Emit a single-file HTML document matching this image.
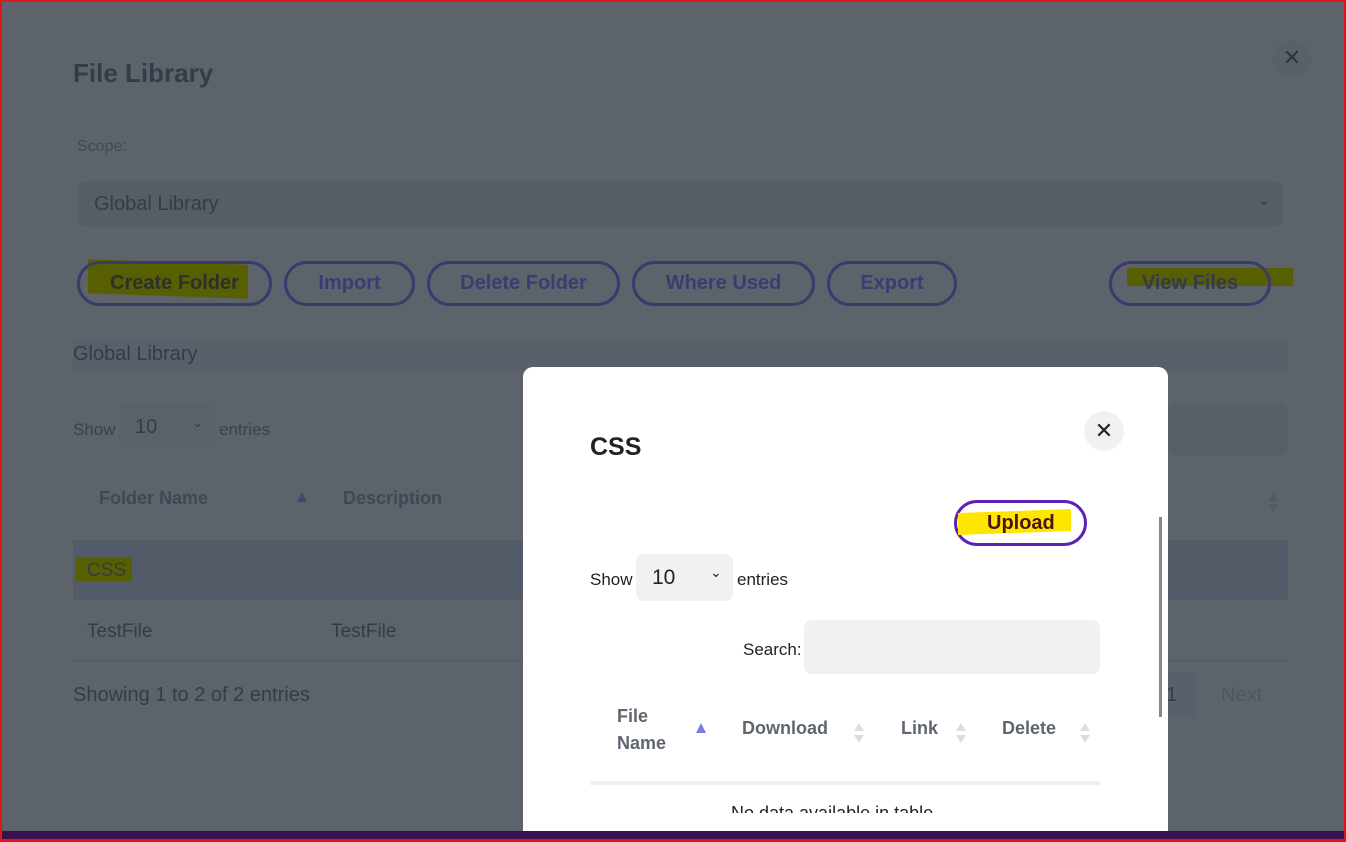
<!DOCTYPE html>
<html><head><style>
*{box-sizing:border-box;margin:0;padding:0}
body{width:1346px;height:842px;overflow:hidden;background:#5c636b;font-family:"Liberation Sans",sans-serif;position:relative}
.a{position:absolute;white-space:nowrap}
.dk{color:#363b47}
.btn{position:absolute;top:261px;height:45px;border:3px solid #3b3a6c;border-radius:23px;color:#3d3b72;font-size:20px;font-weight:bold;display:flex;align-items:center;justify-content:center}
.hl{position:absolute;background:#585f00}
.sort{position:absolute;width:0;height:0;border-left:5px solid transparent;border-right:5px solid transparent}
</style></head><body>
<div class="a" style="left:0;top:0;width:1346px;height:842px;border:2px solid #e0141a;border-bottom:none;pointer-events:none;z-index:9"></div>
<div class="a" style="left:0;bottom:0;width:1346px;height:3px;background:#e0141a;z-index:9"></div>
<div class="a" style="left:0;top:831px;width:1346px;height:9px;background:#38124f"></div>

<div class="a" style="left:1273px;top:40px;width:38px;height:38px;border-radius:50%;background:#586068;color:#333;font-size:22px;text-align:center;line-height:36px">✕</div>
<div class="a dk" style="left:73px;top:58px;font-size:26px;font-weight:bold">File Library</div>
<div class="a" style="left:77px;top:138px;font-size:16px;color:#434853">Scope:</div>
<div class="a" style="left:78px;top:181px;width:1205px;height:46px;background:#575d65;border-radius:8px"></div>
<div class="a dk" style="left:94px;top:193px;font-size:20px">Global Library</div>
<div class="a" style="left:1258px;top:192px;font-size:14px;color:#333">⌄</div>

<div class="hl" style="left:88px;top:262px;width:160px;height:34px;transform:skewY(2deg)"></div>
<div class="hl" style="left:1127px;top:268px;width:166px;height:18px"></div>
<div class="btn" style="left:77px;width:195px;color:#2e3030">Create Folder</div>
<div class="btn" style="left:284px;width:131px">Import</div>
<div class="btn" style="left:427px;width:193px">Delete Folder</div>
<div class="btn" style="left:632px;width:183px">Where Used</div>
<div class="btn" style="left:827px;width:130px">Export</div>
<div class="btn" style="left:1109px;width:162px;color:#363a50">View Files</div>

<div class="a" style="left:73px;top:338px;width:1215px;height:33px;background:#59606a"></div>
<div class="a dk" style="left:73px;top:343px;font-size:20px">Global Library</div>
<div class="a" style="left:73px;top:420px;font-size:17px;color:#3c414c">Show</div>
<div class="a" style="left:119px;top:403px;width:96px;height:46px;background:#5a6169;border-radius:8px"></div>
<div class="a dk" style="left:135px;top:416px;font-size:20px">10</div>
<div class="a dk" style="left:192px;top:414px;font-size:14px">⌄</div>
<div class="a" style="left:219px;top:420px;font-size:17px;color:#3c414c">entries</div>
<div class="a" style="left:1168px;top:403px;width:120px;height:52px;background:#585f67;border-radius:8px"></div>
<div class="a" style="left:99px;top:488px;font-size:18px;font-weight:bold;color:#3f4855">Folder Name</div>
<div class="sort" style="left:297px;top:492px;border-bottom:10px solid #3d4a70"></div>
<div class="a" style="left:343px;top:488px;font-size:18px;font-weight:bold;color:#3f4855">Description</div>
<div class="sort" style="left:1268px;top:493px;border-bottom:8px solid #545a63"></div>
<div class="sort" style="left:1268px;top:504px;border-top:8px solid #545a63"></div>
<div class="a" style="left:73px;top:540px;width:1215px;height:60px;background:#545b68"></div>
<div class="hl" style="left:76px;top:557px;width:56px;height:24px"></div>
<div class="a dk" style="left:87px;top:560px;font-size:19px">CSS</div>
<div class="a" style="left:73px;top:660px;width:1215px;height:2px;background:#575e66"></div>
<div class="a dk" style="left:87px;top:621px;font-size:19px">TestFile</div>
<div class="a dk" style="left:331px;top:621px;font-size:19px">TestFile</div>
<div class="a dk" style="left:73px;top:684px;font-size:20px">Showing 1 to 2 of 2 entries</div>
<div class="a" style="left:1150px;top:672px;width:46px;height:46px;background:#57606c;border-radius:4px"></div>
<div class="a dk" style="left:1166px;top:684px;font-size:20px">1</div>
<div class="a" style="left:1221px;top:684px;font-size:20px;color:#4e555e">Next</div>

<div class="a" style="left:523px;top:367px;width:645px;height:464px;background:#fff;border-radius:10px 10px 0 0;overflow:hidden">
 <div class="a" style="left:561px;top:44px;width:40px;height:40px;border-radius:50%;background:#f1f1f1;color:#222;font-size:22px;text-align:center;line-height:40px">✕</div>
 <div class="a" style="left:67px;top:66px;font-size:25px;font-weight:bold;color:#222">CSS</div>
 <div class="a" style="left:431px;top:133px;width:133px;height:46px;border:3px solid #5a22b8;border-radius:23px"></div>
 <div class="a" style="left:435px;top:144px;width:113px;height:22px;background:#ffe600;transform:skewY(-2deg)"></div>
 <div class="a" style="left:464px;top:145px;font-size:20px;font-weight:bold;color:#4a1410">Upload</div>
 <div class="a" style="left:67px;top:203px;font-size:17px;color:#222">Show</div>
 <div class="a" style="left:113px;top:187px;width:97px;height:47px;background:#f1f1f1;border-radius:8px"></div>
 <div class="a" style="left:129px;top:199px;font-size:21px;color:#222">10</div>
 <div class="a" style="left:187px;top:197px;font-size:14px;color:#222">⌄</div>
 <div class="a" style="left:214px;top:203px;font-size:17px;color:#222">entries</div>
 <div class="a" style="left:220px;top:273px;font-size:17px;color:#222">Search:</div>
 <div class="a" style="left:281px;top:253px;width:296px;height:54px;background:#f1f1f1;border-radius:8px"></div>
 <div class="a" style="left:94px;top:336px;font-size:18px;font-weight:bold;color:#5f6670;line-height:27px">File<br>Name</div>
 <div class="sort" style="left:173px;top:356px;border-bottom:10px solid #7a7ee0"></div>
 <div class="a" style="left:219px;top:351px;font-size:18px;font-weight:bold;color:#5f6670">Download</div>
 <div class="sort" style="left:331px;top:356px;border-bottom:8px solid #ddd"></div><div class="sort" style="left:331px;top:368px;border-top:8px solid #ddd"></div>
 <div class="a" style="left:378px;top:351px;font-size:18px;font-weight:bold;color:#5f6670">Link</div>
 <div class="sort" style="left:433px;top:356px;border-bottom:8px solid #ddd"></div><div class="sort" style="left:433px;top:368px;border-top:8px solid #ddd"></div>
 <div class="a" style="left:479px;top:351px;font-size:18px;font-weight:bold;color:#5f6670">Delete</div>
 <div class="sort" style="left:557px;top:356px;border-bottom:8px solid #ddd"></div><div class="sort" style="left:557px;top:368px;border-top:8px solid #ddd"></div>
 <div class="a" style="left:67px;top:414px;width:510px;height:4px;background:#efefef"></div>
 <div class="a" style="left:0;top:436px;width:645px;height:10px;overflow:hidden"><div class="a" style="left:208px;top:0;font-size:18px;color:#222">No data available in table</div></div>
 <div class="a" style="left:636px;top:150px;width:3px;height:200px;background:#888"></div>
</div>
</body></html>
